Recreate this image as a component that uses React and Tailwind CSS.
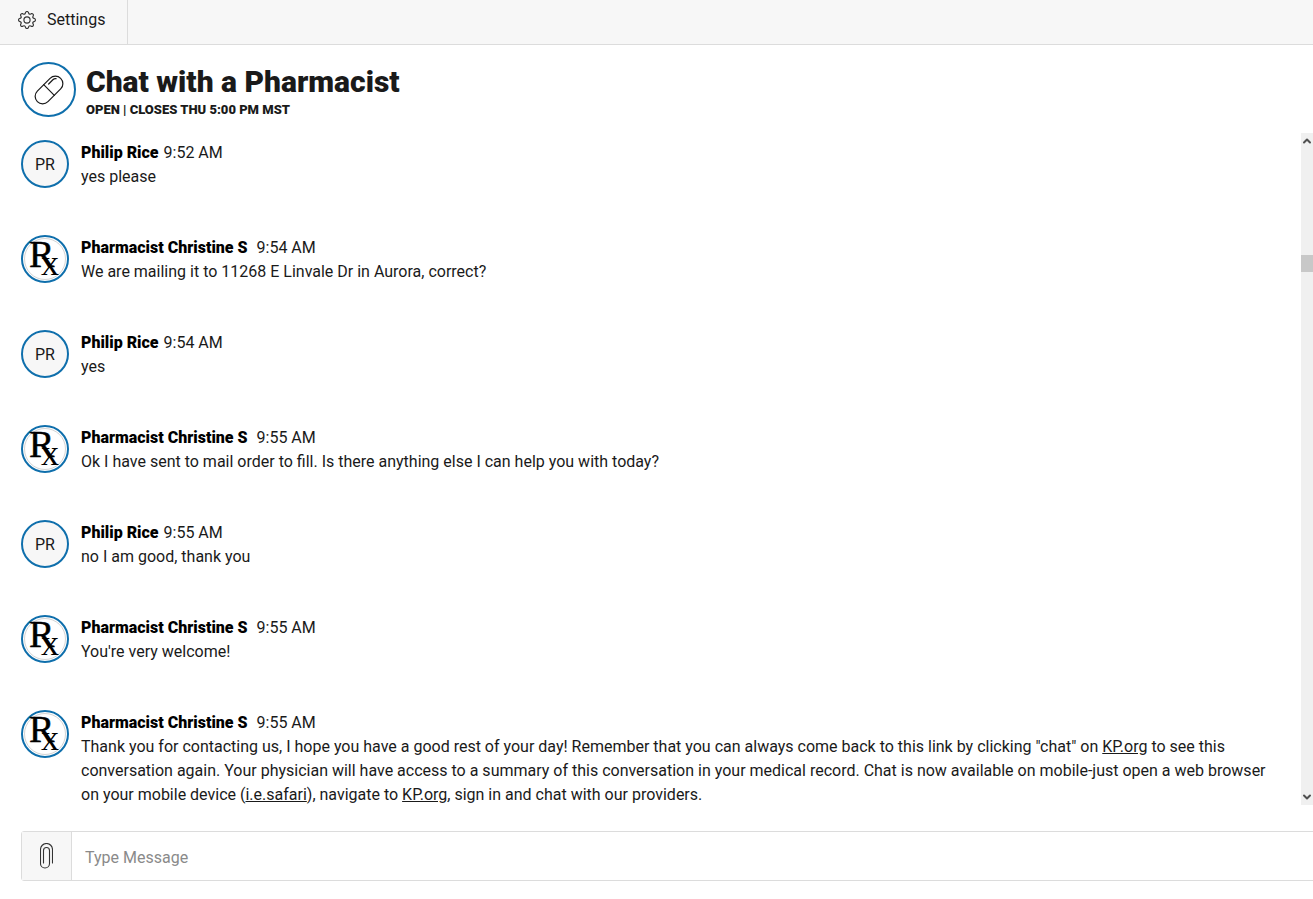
import { ChevronUp, ChevronDown } from 'lucide-react'
import { BsGear } from 'react-icons/bs'

const font = { fontFamily: 'Roboto, sans-serif' }

const messages = [
  { who: 'pr', name: 'Philip Rice', time: '9:52 AM', text: 'yes please' },
  { who: 'rx', name: 'Pharmacist Christine S', time: '9:54 AM', text: 'We are mailing it to 11268 E Linvale Dr in Aurora, correct?' },
  { who: 'pr', name: 'Philip Rice', time: '9:54 AM', text: 'yes' },
  { who: 'rx', name: 'Pharmacist Christine S', time: '9:55 AM', text: 'Ok I have sent to mail order to fill. Is there anything else I can help you with today?' },
  { who: 'pr', name: 'Philip Rice', time: '9:55 AM', text: 'no I am good, thank you' },
  { who: 'rx', name: 'Pharmacist Christine S', time: '9:55 AM', text: "You're very welcome!" },
]

function Avatar({ who }) {
  if (who === 'pr') {
    return (
      <div className="w-12 h-12 shrink-0 rounded-full border-2 border-[#0f6fac] bg-[#f7f7f7] flex items-center justify-center pt-[1px] text-base text-[#1a1a1a]">
        PR
      </div>
    )
  }
  return (
    <div className="relative w-12 h-12 shrink-0 rounded-full border-2 border-[#0f6fac] bg-white">
      <div className="absolute inset-[1px] rounded-full border border-[#d4d4d4]" />
      <span className="absolute left-[6px] top-[-2px] text-[38px] leading-[38px] text-black [-webkit-text-stroke:0.5px_black] font-['Liberation_Serif',serif]">R</span>
      <span className="absolute left-[18px] top-[8px] text-[36px] leading-[36px] text-black font-['Liberation_Serif',serif]">x</span>
    </div>
  )
}

function Message({ m, children }) {
  return (
    <div className="flex gap-3 min-h-[95px]">
      <Avatar who={m.who} />
      <div className="flex-1 pt-[1px] text-base leading-6 text-[#1a1a1a]">
        <div>
          <span className="font-black text-black">{m.name}</span>
          <span className={m.who === 'rx' ? 'ml-[9px]' : 'ml-[5px]'}>{m.time}</span>
        </div>
        <div>{children || m.text}</div>
      </div>
    </div>
  )
}

export default function App() {
  return (
    <div className="h-[899px] overflow-hidden bg-white flex flex-col" style={font}>
      <div className="h-[45px] shrink-0 bg-[#f7f7f7] border-b border-[#dcdcdc] flex">
        <div className="w-[128px] border-r border-[#dcdcdc] flex items-center gap-[11px] pl-[18px] pb-[5px] text-base text-[#1a1a1a]">
          <BsGear size={18} className="text-[#333]" />
          Settings
        </div>
      </div>

      <div className="flex gap-[10px] pl-[21px] pt-[17px] h-[88px] shrink-0">
        <div className="w-[55px] h-[55px] shrink-0 rounded-full border-2 border-[#0f6fac] flex items-center justify-center text-[#1a1a1a]">
          <svg width="30" height="30" viewBox="-15 -15 30 30" fill="none" stroke="currentColor" strokeWidth="1.2" strokeLinecap="round">
            <g transform="rotate(-45)">
              <rect x="-16.500" y="-7.500" width="33" height="15" rx="7.500" />
              <path d="M0 -7.500V7.500" />
              <path d="M4 -4.500H10a4 4 0 0 1 3 1.500" />
            </g>
          </svg>
        </div>
        <div className="pt-[1px]">
          <h1 className="text-[30px] leading-[38px] font-black text-[#1a1a1a]">Chat with a Pharmacist</h1>
          <p className="text-[13px] leading-4 font-black text-[#1a1a1a] mt-[1px]">OPEN | CLOSES THU 5:00 PM MST</p>
        </div>
      </div>

      <div className="h-[672px] shrink-0 flex pl-[21px]">
        <div className="flex-1 pt-[7px] pr-5 overflow-hidden">
          {messages.map((m, i) => <Message key={i} m={m} />)}
          <Message m={{ who: 'rx', name: 'Pharmacist Christine S', time: '9:55 AM' }}>
            Thank you for contacting us, I hope you have a good rest of your day! Remember that you can always come back to this link by clicking "chat" on <a className="underline">KP.org</a> to see this conversation again. Your physician will have access to a summary of this conversation in your medical record. Chat is now available on mobile-just open a web browser on your mobile device (<a className="underline">i.e.safari</a>), navigate to <a className="underline">KP.org</a>, sign in and chat with our providers.
          </Message>
        </div>
        <div className="relative w-3 shrink-0 bg-[#f0f0f0] flex flex-col justify-between items-center text-[#505050]">
          <ChevronUp size={12} strokeWidth={4} className="mt-[2px]" />
          <div className="absolute left-0 top-[122px] w-3 h-[17px] bg-[#c8c8c8]" />
          <ChevronDown size={12} strokeWidth={4} className="mb-[2px]" />
        </div>
      </div>

      <div className="ml-[21px] mt-[26px] w-[1320px] h-[50px] shrink-0 flex border border-[#dcdcdc] rounded-[3px]">
        <div className="w-[50px] shrink-0 bg-[#f7f7f7] border-r border-[#dcdcdc] flex items-center justify-center">
          <svg width="13" height="26" viewBox="0 0 13 26" fill="none" stroke="#333" strokeWidth="1.1" strokeLinecap="round">
            <path d="M12.500 20V6.500a6 6 0 0 0-12 0V20.500a4.500 4.500 0 0 0 9 0V7.500a3 3 0 0 0-6 0V20" />
          </svg>
        </div>
        <div className="flex-1 flex items-center pl-[13px] pt-[4px] text-base text-[#8a8a8a]">Type Message</div>
      </div>
    </div>
  )
}
